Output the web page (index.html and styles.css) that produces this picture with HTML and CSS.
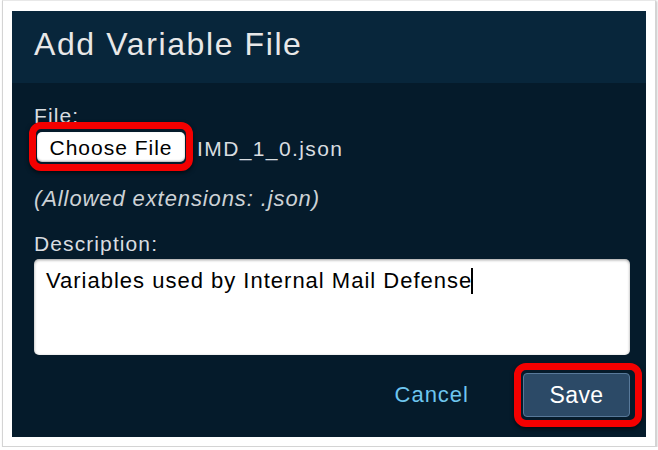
FILE: index.html
```html
<!DOCTYPE html>
<html>
<head>
<meta charset="utf-8">
<link rel="stylesheet" href="styles.css">
</head>
<body>
<div class="frame">
  <div class="dialog">
    <div class="dialog-header">
      <h1 class="title">Add Variable File</h1>
    </div>
    <div class="dialog-body">
      <div class="label label-file">File:</div>
      <div class="file-row">
        <span class="highlight highlight-choose"><span class="choose-btn">Choose File</span></span>
        <span class="file-name">IMD_1_0.json</span>
      </div>
      <div class="hint">(Allowed extensions: .json)</div>
      <div class="label label-desc">Description:</div>
      <div class="textarea"><span class="textarea-text">Variables used by Internal Mail Defense</span><span class="caret"></span></div>
      <div class="actions">
        <span class="cancel">Cancel</span>
        <span class="highlight highlight-save"><span class="save-btn">Save</span></span>
      </div>
    </div>
  </div>
</div>
</body>
</html>
```

FILE: styles.css
```css
html, body {
  margin: 0;
  padding: 0;
  background: #ffffff;
  font-family: "Liberation Sans", Arial, sans-serif;
}

.frame {
  box-sizing: border-box;
  width: 654px;
  height: 447px;
  margin: 0 0 0 2px;
  border: 1px solid #d4d4d4;
  border-top-color: #e8e8e8;
  box-shadow: 1px 1px 2px rgba(0, 0, 0, 0.25);
  padding: 10px 9px 0 9px;
  background: #ffffff;
}

.dialog {
  width: 634px;
  height: 426px;
  background: #051b2b;
  display: flex;
  flex-direction: column;
}

.dialog-header {
  height: 72px;
  flex: none;
  background: #08263b;
  padding: 17px 0 0 22px;
  box-sizing: border-box;
}

.title {
  margin: 0;
  font-weight: normal;
  font-size: 32px;
  line-height: 32px;
  color: #e8e8e8;
  letter-spacing: 1.6px;
}

.dialog-body {
  padding: 0 16px 0 22px;
  display: flex;
  flex-direction: column;
}

.label {
  color: #d9dde0;
  font-size: 21px;
  line-height: 21px;
  letter-spacing: 1.1px;
}

.label-file {
  margin-top: 22px;
}

.file-row {
  display: flex;
  align-items: center;
  margin-left: -5px;
  margin-top: -4px;
}

.highlight {
  display: inline-flex;
  border: 7px solid #f40000;
  border-radius: 12px;
  box-shadow: 0 2px 4px rgba(0, 0, 0, 0.6);
}

.highlight-choose {
  padding: 3px 1px 2px 1px;
}

.choose-btn {
  display: inline-flex;
  align-items: center;
  justify-content: center;
  width: 148px;
  height: 30px;
  padding-top: 2px;
  box-sizing: border-box;
  background: #ffffff;
  border-radius: 5px;
  box-shadow: inset 0 -1px 2px rgba(0, 0, 0, 0.3);
  color: #000000;
  font-size: 21px;
  letter-spacing: 1px;
}

.file-name {
  margin: 4px 0 0 4px;
  color: #d9dde0;
  font-size: 21px;
  letter-spacing: 1.4px;
}

.hint {
  margin-top: 17px;
  color: #cdd2d6;
  font-size: 22px;
  font-style: italic;
  line-height: 22px;
  letter-spacing: 0.9px;
}

.label-desc {
  margin-top: 23px;
}

.textarea {
  margin-top: 5px;
  height: 96px;
  width: 596px;
  box-sizing: border-box;
  background: #ffffff;
  border-radius: 5px;
  box-shadow: inset 0 1px 3px rgba(0, 0, 0, 0.4);
  padding: 9px 0 0 12px;
  color: #000000;
  font-size: 22px;
  line-height: 22px;
  white-space: nowrap;
}

.textarea-text {
  letter-spacing: 1px;
}

.caret {
  display: inline-block;
  width: 2px;
  height: 26px;
  background: #000000;
  vertical-align: -6px;
  margin-left: -1px;
}

.actions {
  display: flex;
  justify-content: flex-end;
  align-items: center;
  margin-top: 8px;
  margin-right: -12px;
}

.cancel {
  color: #6ec6ef;
  font-size: 22px;
  letter-spacing: 1px;
  margin-right: 45px;
}

.highlight-save {
  padding: 3px 5px 3px 2px;
}

.save-btn {
  display: inline-flex;
  align-items: center;
  justify-content: center;
  width: 107px;
  height: 44px;
  box-sizing: border-box;
  background: #2c4a67;
  border: 1.5px solid #58799a;
  border-radius: 4px;
  color: #ffffff;
  font-size: 23px;
  letter-spacing: 0.4px;
}
```
